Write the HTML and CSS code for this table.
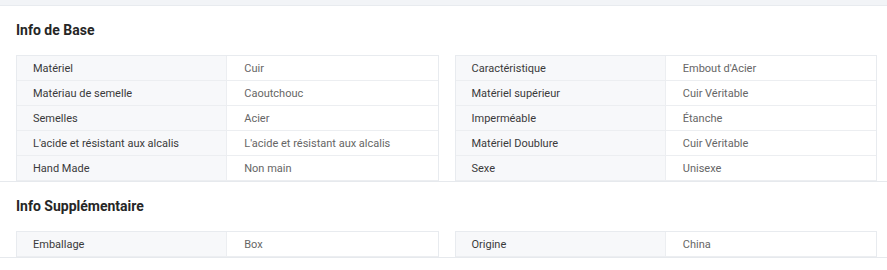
FILE: index.html
```html
<!DOCTYPE html>
<html lang="fr">
<head>
    <meta charset="UTF-8">
    <meta name="viewport" content="width=device-width, initial-scale=1.0">
    <title>Fiche produit</title>
    <link rel="stylesheet" href="styles.css">
</head>
<body>

<div class="topbar"></div>

<div class="section">
    <h2>Info de Base</h2>
    <div class="columns">
        <div class="attr-table">
            <div class="row"><div class="label">Matériel</div><div class="value">Cuir</div></div>
            <div class="row"><div class="label">Matériau de semelle</div><div class="value">Caoutchouc</div></div>
            <div class="row"><div class="label">Semelles</div><div class="value">Acier</div></div>
            <div class="row"><div class="label">L'acide et résistant aux alcalis</div><div class="value">L'acide et résistant aux alcalis</div></div>
            <div class="row"><div class="label">Hand Made</div><div class="value">Non main</div></div>
        </div>
        <div class="attr-table">
            <div class="row"><div class="label">Caractéristique</div><div class="value">Embout d'Acier</div></div>
            <div class="row"><div class="label">Matériel supérieur</div><div class="value">Cuir Véritable</div></div>
            <div class="row"><div class="label">Imperméable</div><div class="value">Étanche</div></div>
            <div class="row"><div class="label">Matériel Doublure</div><div class="value">Cuir Véritable</div></div>
            <div class="row"><div class="label">Sexe</div><div class="value">Unisexe</div></div>
        </div>
    </div>
</div>

<div class="section">
    <h2>Info Supplémentaire</h2>
    <div class="columns">
        <div class="attr-table">
            <div class="row"><div class="label">Emballage</div><div class="value">Box</div></div>
        </div>
        <div class="attr-table">
            <div class="row"><div class="label">Origine</div><div class="value">China</div></div>
        </div>
    </div>
</div>

</body>
</html>
```

FILE: styles.css
```css
body {
    font-family: Roboto, "Liberation Sans", Arial, sans-serif;
    margin: 0;
    padding: 0;
    background-color: #fff;
    color: #333;
}
.topbar {
    height: 5px;
    background-color: #f2f4f7;
    border-bottom: 1px solid #e8ebef;
}
.section {
    padding: 14px 10px 0 16px;
    border-bottom: 1px solid #e6e9ed;
}
.section h2 {
    margin: 0 0 15px 0;
    font-size: 14px;
    line-height: 20px;
    font-weight: 700;
    color: #262626;
}
.columns {
    display: grid;
    grid-template-columns: 1fr 1fr;
    gap: 16px;
}
.attr-table {
    border: 1px solid #e8ebef;
    border-bottom: none;
    font-size: 11px;
}
.row {
    display: grid;
    grid-template-columns: 1fr 1fr;
    height: 24px;
    border-bottom: 1px solid #eceef1;
}
.label, .value {
    display: flex;
    align-items: center;
    padding-left: 16px;
    white-space: nowrap;
}
.label {
    background-color: #f7f8fa;
    border-right: 1px solid #eceef1;
    color: #3a3a3a;
}
.value {
    padding-left: 17px;
    color: #666;
}
```
